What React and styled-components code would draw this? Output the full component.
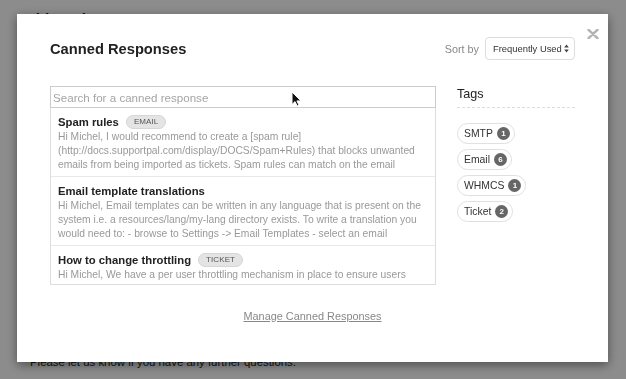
import React from 'react'
import styled, { createGlobalStyle } from 'styled-components'

const GlobalStyle = createGlobalStyle`
    html, body {
        margin: 0;
        padding: 0;
    }
    body {
        background: #fff;
        font-family: "Liberation Sans", Arial, sans-serif;
        overflow: hidden;
    }
`;

const Page = styled.div`
    height: 379px;
    box-sizing: border-box;
    display: flex;
    flex-direction: column;
    justify-content: space-between;
    padding: 11px 20px 10px;
`;

const PageHeading = styled.h2`
    margin: 0;
    font-size: 15px;
    line-height: 16px;
    font-weight: bold;
    color: #222;
`;

const PageText = styled.p`
    margin: 0 0 0 10px;
    font-size: 11.4px;
    line-height: 14px;
    color: #222;
`;

const Overlay = styled.div`
    position: fixed;
    inset: 0;
    background: rgba(0, 0, 0, 0.45);
    display: flex;
    align-items: flex-start;
    padding: 14px 0 0 17px;
`;

const Modal = styled.div`
    position: relative;
    width: 591px;
    height: 348px;
    box-sizing: border-box;
    background: #fff;
    padding: 23px 33px 0;
    box-shadow: 0 3px 10px rgba(0, 0, 0, 0.45);
    display: flex;
    flex-direction: column;
`;

const Close = styled.button`
    position: absolute;
    top: 15px;
    right: 9px;
    padding: 0;
    border: 0;
    background: none;
    cursor: pointer;
    display: flex;
`;

const Header = styled.div`
    display: flex;
    align-items: center;
    height: 23px;
`;

const Title = styled.h1`
    margin: 0;
    flex: 1;
    font-size: 14.7px;
    font-weight: bold;
    color: #222;
`;

const SortLabel = styled.span`
    font-size: 10.8px;
    color: #888;
    margin-right: 6px;
`;

const Select = styled.div`
    width: 90px;
    height: 23px;
    box-sizing: border-box;
    border: 1px solid #ddd;
    border-radius: 4px;
    display: flex;
    align-items: center;
    justify-content: space-between;
    padding: 0 5px 0 7px;
    font-size: 9.4px;
    color: #333;
`;

const Body = styled.div`
    display: flex;
    gap: 21px;
    margin-top: 26px;
`;

const Main = styled.div`
    position: relative;
    width: 386px;
`;

const Search = styled.input`
    display: block;
    width: 100%;
    height: 22px;
    box-sizing: border-box;
    border: 1px solid #ccc;
    padding: 0 2px;
    margin: 0;
    font-family: inherit;
    font-size: 11.6px;
    color: #333;
    outline: none;
    &::placeholder {
        color: #a5a5a5;
    }
`;

const List = styled.div`
    height: 177px;
    box-sizing: border-box;
    border: 1px solid #ddd;
    border-top: 0;
    overflow: hidden;
`;

const Item = styled.div`
    padding: 6px 7px 4px;
    border-bottom: 1px solid #e8e8e8;
`;

const ItemTitle = styled.div`
    display: flex;
    align-items: center;
    height: 16px;
    font-size: 11.3px;
    font-weight: bold;
    color: #222;
`;

const Badge = styled.span`
    margin-left: 7px;
    height: 12px;
    padding: 0 7px;
    border-radius: 7px;
    background: #e4e4e4;
    border: 1px solid #d6d6d6;
    font-size: 8px;
    font-weight: normal;
    line-height: 12px;
    color: #555;
    letter-spacing: 0.1px;
`;

const Line = styled.div`
    font-size: 10.3px;
    line-height: 14px;
    color: #999;
    white-space: nowrap;
    overflow: hidden;
`;

const Cursor = styled.svg`
    position: absolute;
    left: 241px;
    top: 5px;
`;

const Side = styled.div`
    width: 118px;
`;

const TagsHeading = styled.h3`
    margin: 0;
    font-size: 12.6px;
    font-weight: normal;
    line-height: 16px;
    color: #222;
    padding: 0 0 5px 0;
    border-bottom: 1px dashed #ddd;
`;

const Tags = styled.div`
    display: flex;
    flex-direction: column;
    align-items: flex-start;
    gap: 5px;
    margin-top: 15px;
`;

const Tag = styled.span`
    display: inline-flex;
    align-items: center;
    height: 21px;
    box-sizing: border-box;
    border: 1px solid #e0e0e0;
    border-radius: 11px;
    padding: 0 4px 0 6px;
    font-size: 10.4px;
    color: #333;
`;

const Count = styled.span`
    margin-left: 4px;
    width: 13px;
    height: 13px;
    border-radius: 50%;
    background: #666;
    color: #fff;
    font-size: 8px;
    font-weight: bold;
    display: flex;
    align-items: center;
    justify-content: center;
`;

const Footer = styled.div`
    text-align: center;
    margin-top: 21px;
`;

const ManageLink = styled.a`
    font-size: 10.9px;
    line-height: 14px;
    color: #888;
    text-decoration: underline;
    cursor: pointer;
`;

const responses = [
    {
        title: 'Spam rules',
        tag: 'EMAIL',
        lines: [
            'Hi Michel, I would recommend to create a [spam rule]',
            '(http://docs.supportpal.com/display/DOCS/Spam+Rules) that blocks unwanted',
            'emails from being imported as tickets. Spam rules can match on the email',
        ],
    },
    {
        title: 'Email template translations',
        lines: [
            'Hi Michel, Email templates can be written in any language that is present on the',
            'system i.e. a resources/lang/my-lang directory exists. To write a translation you',
            'would need to: - browse to Settings -> Email Templates - select an email',
        ],
    },
    {
        title: 'How to change throttling',
        tag: 'TICKET',
        lines: [
            'Hi Michel, We have a per user throttling mechanism in place to ensure users',
            "don't send multiple tickets within a short period of time, by default the limit is",
            'five tickets within an hour. This can be changed in Settings -> Tickets',
        ],
    },
];

const tags = [
    { name: 'SMTP', count: 1 },
    { name: 'Email', count: 6 },
    { name: 'WHMCS', count: 1 },
    { name: 'Ticket', count: 2 },
];

const App = () => {
    return (
        <>
            <GlobalStyle />
            <Page>
                <PageHeading>Add Reply</PageHeading>
                <PageText>Please let us know if you have any further questions.</PageText>
            </Page>
            <Overlay>
                <Modal>
                    <Close aria-label="Close">
                        <svg width="12" height="10" viewBox="0 0 12 10">
                            <path d="M1.5 0.8 L10.5 9.2 M10.5 0.8 L1.5 9.2" stroke="#b3b3b3" strokeWidth="2.4" strokeLinecap="round" />
                        </svg>
                    </Close>
                    <Header>
                        <Title>Canned Responses</Title>
                        <SortLabel>Sort by</SortLabel>
                        <Select>
                            Frequently Used
                            <svg width="5" height="9" viewBox="0 0 5 9">
                                <path d="M2.5 0.5 L4.8 3.6 H0.2 Z M2.5 8.5 L4.8 5.4 H0.2 Z" fill="#444" />
                            </svg>
                        </Select>
                    </Header>
                    <Body>
                        <Main>
                            <Search placeholder="Search for a canned response" />
                            <List>
                                {responses.map((r, i) => (
                                    <Item key={i}>
                                        <ItemTitle>
                                            {r.title}
                                            {r.tag && <Badge>{r.tag}</Badge>}
                                        </ItemTitle>
                                        {r.lines.map((l, j) => (
                                            <Line key={j}>{l}</Line>
                                        ))}
                                    </Item>
                                ))}
                            </List>
                            <Cursor width="11" height="16" viewBox="0 0 11 16">
                                <path d="M1 1 L1 13.5 L4 10.6 L6.2 15 L8 14.1 L5.9 9.9 L10 9.9 Z" fill="#111" stroke="#fff" strokeWidth="1" strokeLinejoin="round" />
                            </Cursor>
                        </Main>
                        <Side>
                            <TagsHeading>Tags</TagsHeading>
                            <Tags>
                                {tags.map((t) => (
                                    <Tag key={t.name}>
                                        {t.name}
                                        <Count>{t.count}</Count>
                                    </Tag>
                                ))}
                            </Tags>
                        </Side>
                    </Body>
                    <Footer>
                        <ManageLink>Manage Canned Responses</ManageLink>
                    </Footer>
                </Modal>
            </Overlay>
        </>
    )
}

export default App
